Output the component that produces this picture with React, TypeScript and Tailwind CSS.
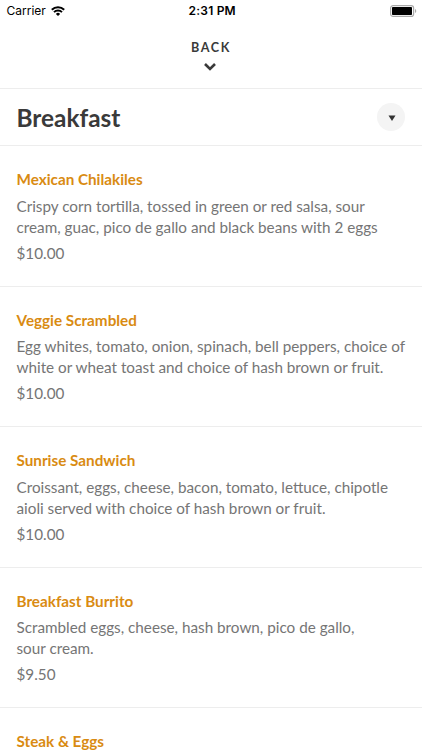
interface MenuItem {
  name: string;
  lines: string[];
  price: string;
}

const items: MenuItem[] = [
  {
    name: 'Mexican Chilakiles',
    lines: ['Crispy corn tortilla, tossed in green or red salsa, sour', 'cream, guac, pico de gallo and black beans with 2 eggs'],
    price: '$10.00',
  },
  {
    name: 'Veggie Scrambled',
    lines: ['Egg whites, tomato, onion, spinach, bell peppers, choice of', 'white or wheat toast and choice of hash brown or fruit.'],
    price: '$10.00',
  },
  {
    name: 'Sunrise Sandwich',
    lines: ['Croissant, eggs, cheese, bacon, tomato, lettuce, chipotle', 'aioli served with choice of hash brown or fruit.'],
    price: '$10.00',
  },
  {
    name: 'Breakfast Burrito',
    lines: ['Scrambled eggs, cheese, hash brown, pico de gallo,', 'sour cream.'],
    price: '$9.50',
  },
  { name: 'Steak & Eggs', lines: [], price: '' },
];

const StatusBar = () => (
  <div className="grid h-[22px] grid-cols-3 items-center pl-[6.5px] pr-[5px] font-['Inter',sans-serif] text-[12px] text-black">
    <div className="flex items-center gap-[5px]">
      <span>Carrier</span>
      <svg width="14" height="10" viewBox="0 0 14 10" fill="none" stroke="#000" strokeWidth="2">
        <path d="M.8 3.8a8.8 8.8 0 0 1 12.4 0M3 6.1a5.7 5.7 0 0 1 8 0" />
        <path d="M7 10 4.9 7.9a3 3 0 0 1 4.2 0z" fill="#000" stroke="none" />
      </svg>
    </div>
    <span className="pl-px text-center font-semibold tracking-[0.2px]">2:31 PM</span>
    <svg className="justify-self-end" width="27" height="12" viewBox="0 0 27 12">
      <rect x="0.6" y="0.6" width="23" height="10.8" rx="2.5" fill="none" stroke="#aaa" strokeWidth="1.2" />
      <rect x="2" y="2" width="20" height="8" rx="0.8" />
      <path d="M25 4v4a2.2 2.2 0 0 0 0-4z" fill="#aaa" />
    </svg>
  </div>
);

export default function App() {
  return (
    <div className="h-[750px] w-[422px] overflow-hidden bg-white font-['Lato',sans-serif]">
      <StatusBar />
      <button className="flex h-[67px] w-full flex-col items-center border-b border-[#ededed] pt-[15.5px] text-[#3a3a3a]">
        <span className="text-[12.6px] font-bold leading-[20px] tracking-[1.6px]">BACK</span>
        <svg className="mt-[5.5px] mr-[2px]" width="12" height="8" viewBox="0 0 12 8" fill="none" stroke="#3a3a3a" strokeWidth="2.6">
          <path d="m1 1 5 5 5-5" />
        </svg>
      </button>
      <div className="flex h-[57px] items-center justify-between border-b border-[#ededed] pl-[16.5px] pr-[17px]">
        <h1 className="pt-[2px] text-[24.4px] font-bold text-[#3a3a3a]">Breakfast</h1>
        <button className="flex size-[28px] items-center justify-center rounded-full bg-[#f4f4f4]">
          <svg className="mt-px ml-px" width="8" height="6" viewBox="0 0 8 6" fill="#333">
            <path d="M.5.5h7L4 6z" />
          </svg>
        </button>
      </div>
      {items.map((item) => (
        <div key={item.name} className="h-[140.5px] border-b border-[#ededed] px-[16.5px] pt-[23.4px] text-[15.25px] text-[#757575]">
          <h2 className="mb-[6.6px] leading-[20px] font-bold text-[#d98b12]">{item.name}</h2>
          {item.lines.map((line) => (
            <p key={line} className="whitespace-nowrap leading-[20.6px]">{line}</p>
          ))}
          <p className="mt-[5.6px] leading-[20px]">{item.price}</p>
        </div>
      ))}
    </div>
  );
}
